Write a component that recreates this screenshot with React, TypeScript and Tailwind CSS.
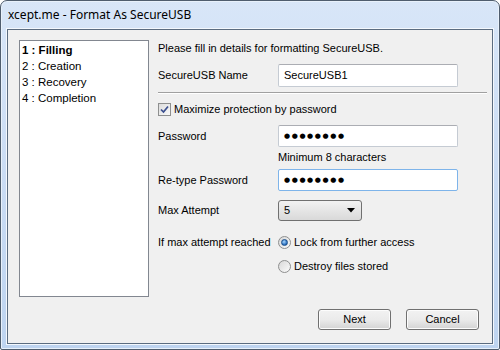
import { useState } from "react";

const steps = ["1 : Filling", "2 : Creation", "3 : Recovery", "4 : Completion"];

function TextBox({ value, dots, focused }: { value?: string; dots?: boolean; focused?: boolean }) {
  return (
    <div
      className={`w-[180px] h-full bg-white border rounded-[2px] flex items-center pl-[5px] ${
        focused ? "border-[#7eb4ea]" : "border-[#c5cbd3] border-t-[#abadb3]"
      }`}
    >
      {dots ? (
        <span className="text-[7px] tracking-[1.6px] text-black font-['DejaVu_Sans',sans-serif]">
          ●●●●●●●●
        </span>
      ) : (
        <span className="text-[11px] text-black">{value}</span>
      )}
    </div>
  );
}

function Radio({ checked }: { checked?: boolean }) {
  return (
    <span className="w-[13px] h-[13px] rounded-full border border-[#8e8f8f] bg-gradient-to-br from-[#d8d8d8] to-[#fbfbfb] flex items-center justify-center shrink-0">
      {checked && (
        <span className="w-[7px] h-[7px] rounded-full bg-[radial-gradient(circle_at_40%_35%,#a7d8ff,#1a5fb4_75%)] border border-[#1b4f8a]" />
      )}
    </span>
  );
}

function Button({ label }: { label: string }) {
  return (
    <button className="w-[73px] h-[21px] rounded-[3px] border border-[#707070] bg-gradient-to-b from-[#f2f2f2] via-[#ebebeb] to-[#d3d3d3] text-[11px] text-black shadow-[inset_0_0_0_1px_#fcfcfc]">
      {label}
    </button>
  );
}

export default function App() {
  const [lock, setLock] = useState(true);

  return (
    <div className="w-[500px] h-[350px] bg-white font-['Liberation_Sans',Arial,sans-serif]">
      <div className="w-[500px] h-[350px] rounded-t-[7px] rounded-b-[2px] border border-[#4f5d6e] bg-gradient-to-b from-[#d8e6f8] via-[#cadcf4] to-[#bed4f0] flex flex-col shadow-[inset_0_0_0_1px_#e8f1fb]">
        {/* title bar */}
        <div className="h-[28px] flex items-center pl-[7px] shrink-0">
          <span className="text-[12px] text-black font-['Noto_Sans',sans-serif]">xcept.me - Format As SecureUSB</span>
        </div>

        {/* client area */}
        <div className="mx-[6px] mb-[5px] flex-1 border border-[#5b6c80] bg-[#f0f0f0] shadow-[0_0_0_1px_#f4f8fd] flex flex-col text-[11px] text-black">
          <div className="flex pt-[10px] pl-[11px]">
            <div className="w-[130px] h-[257px] bg-white border border-[#828790] pl-[2px] pt-[2px] flex flex-col shrink-0">
              {steps.map((s, i) => (
                <div
                  key={s}
                  className={`h-[16px] flex items-center text-[11.5px] ${i === 0 ? "font-bold" : ""}`}
                >
                  {s}
                </div>
              ))}
            </div>

            <div className="ml-[9px] flex flex-col flex-1 pr-[5px]">
              <div className="h-[16px] flex items-center">Please fill in details for formatting SecureUSB.</div>

              <div className="mt-[8px] h-[23px] flex items-center">
                <span className="w-[120px]">SecureUSB Name</span>
                <TextBox value="SecureUSB1" />
              </div>

              <div className="mt-[5px] h-[2px] border-t border-[#a0a0a0] border-b border-b-white" />

              <div className="mt-[7px] h-[16px] flex items-center">
                <span className="w-[13px] h-[13px] border border-[#8e8f8f] bg-gradient-to-br from-[#dcdcdc] to-[#fafafa] flex items-center justify-center mr-[3px]">
                  <svg width="9" height="9" viewBox="0 0 9 9">
                    <path d="M1 4.5 L3.5 7 L8 1.5" fill="none" stroke="#3b4f8f" strokeWidth="1.7" />
                  </svg>
                </span>
                <span>Maximize protection by password</span>
              </div>

              <div className="mt-[8px] h-[22px] flex items-center">
                <span className="w-[120px]">Password</span>
                <TextBox dots />
              </div>

              <div className="mt-[3px] h-[14px] flex items-center pl-[120px]">Minimum 8 characters</div>

              <div className="mt-[5px] h-[22px] flex items-center">
                <span className="w-[120px]">Re-type Password</span>
                <TextBox dots focused />
              </div>

              <div className="mt-[9px] h-[21px] flex items-center">
                <span className="w-[120px]">Max Attempt</span>
                <div className="w-[84px] h-full rounded-[3px] border border-[#707070] bg-gradient-to-b from-[#f2f2f2] to-[#d9d9d9] flex items-center justify-between pl-[5px] pr-[6px]">
                  <span>5</span>
                  <svg width="8" height="5" viewBox="0 0 8 5">
                    <path d="M0 0 H8 L4 4.5 Z" fill="#000" />
                  </svg>
                </div>
              </div>

              <div className="mt-[13px] h-[16px] flex items-center">
                <span className="w-[120px]">If max attempt reached</span>
                <label className="flex items-center gap-[3px]" onClick={() => setLock(true)}>
                  <Radio checked={lock} />
                  <span>Lock from further access</span>
                </label>
              </div>

              <div className="mt-[8px] h-[16px] flex items-center pl-[120px]">
                <label className="flex items-center gap-[3px]" onClick={() => setLock(false)}>
                  <Radio checked={!lock} />
                  <span>Destroy files stored</span>
                </label>
              </div>
            </div>
          </div>

          <div className="mt-auto mb-[13px] mr-[13px] flex justify-end gap-[15px]">
            <Button label="Next" />
            <Button label="Cancel" />
          </div>
        </div>
      </div>
    </div>
  );
}
